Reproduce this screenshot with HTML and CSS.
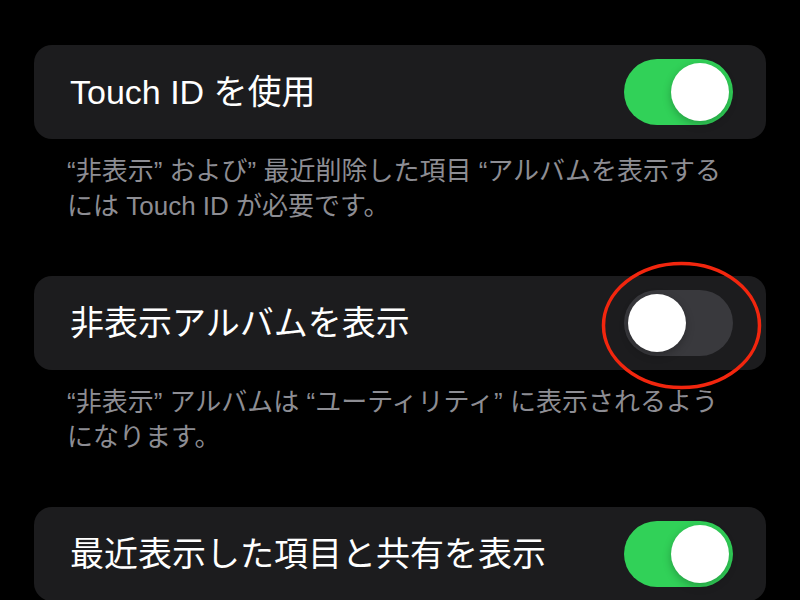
FILE: index.html
```html
<!DOCTYPE html>
<html lang="ja">
<head>
<meta charset="utf-8">
<link rel="stylesheet" href="styles.css">
</head>
<body>
<div class="page">
  <div class="card">
    <span class="label">Touch ID を使用</span>
    <span class="toggle on"><span class="knob"></span></span>
  </div>
  <p class="footer">“非表示” および” 最近削除した項目 “アルバムを表示する<br>には Touch ID が必要です。</p>

  <div class="card marked">
    <span class="label">非表示アルバムを表示</span>
    <span class="toggle off"><span class="knob"></span></span>
    <svg class="circle" width="161" height="129" viewBox="0 0 161 129"><ellipse cx="80.5" cy="64.5" rx="78" ry="62" fill="none" stroke="#f2260e" stroke-width="3.5"/></svg>
  </div>
  <p class="footer">“非表示” アルバムは “ユーティリティ” に表示されるよう<br>になります。</p>

  <div class="card">
    <span class="label">最近表示した項目と共有を表示</span>
    <span class="toggle on"><span class="knob"></span></span>
  </div>
</div>
</body>
</html>
```
FILE: styles.css
```css
html, body {
  margin: 0;
  background: #000;
}
body {
  font-family: "Liberation Sans", "Noto Sans CJK JP", sans-serif;
  overflow: hidden;
  height: 600px;
}
.page {
  padding: 45px 34px 0 34px;
}
.card {
  position: relative;
  display: flex;
  align-items: center;
  justify-content: space-between;
  height: 94px;
  box-sizing: border-box;
  padding: 0 33px 0 36px;
  background: #1c1c1e;
  border-radius: 18px;
}
.label {
  color: #fff;
  font-size: 34px;
  line-height: 40px;
}
.toggle {
  display: flex;
  align-items: center;
  width: 109px;
  height: 66px;
  box-sizing: border-box;
  padding: 4px;
  border-radius: 33px;
}
.toggle.on {
  background: #31d158;
  justify-content: flex-end;
}
.toggle.off {
  background: #39393d;
  justify-content: flex-start;
}
.knob {
  width: 58px;
  height: 58px;
  border-radius: 50%;
  background: #fff;
  box-shadow: 0 3px 8px rgba(0,0,0,0.25);
}
.footer {
  margin: 0;
  padding: 15px 10px 52px 33px;
  color: #8d8d93;
  font-size: 26px;
  line-height: 35px;
  white-space: nowrap;
}
.circle {
  position: absolute;
  left: 567px;
  top: -15px;
}
```
